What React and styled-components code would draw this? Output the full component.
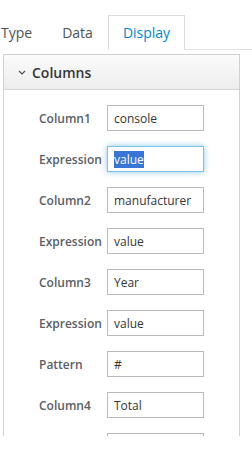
import React, { useEffect, useRef } from "react";
import styled, { createGlobalStyle } from "styled-components";

const GlobalStyle = createGlobalStyle`
  body {
    margin: 0;
    background: #fff;
    font-family: "Open Sans", "Liberation Sans", sans-serif;
  }
`;

const rows = [
  { label: "Column1", value: "console" },
  { label: "Expression", value: "value", focused: true },
  { label: "Column2", value: "manufacturer" },
  { label: "Expression", value: "value" },
  { label: "Column3", value: "Year" },
  { label: "Expression", value: "value" },
  { label: "Pattern", value: "#" },
  { label: "Column4", value: "Total" },
  { label: "Expression", value: "value" },
];

function App() {
  const focusRef = useRef(null);

  useEffect(() => {
    if (focusRef.current) {
      focusRef.current.focus();
      focusRef.current.setSelectionRange(0, focusRef.current.value.length);
    }
  }, []);

  return (
    <Page>
      <GlobalStyle />
      <TabBar>
        <Tab>Type</Tab>
        <Tab>Data</Tab>
        <Tab $active>Display</Tab>
      </TabBar>
      <ScrollArea>
        <Panel>
          <PanelHeader>
            <svg width="8" height="5" viewBox="0 0 8 5">
              <path d="M1 1 L4 4 L7 1" fill="none" stroke="#4d5258" strokeWidth="1.2" />
            </svg>
            <span>Columns</span>
          </PanelHeader>
          <PanelBody>
            {rows.map((row, i) => (
              <Row key={i}>
                <Label>{row.label}</Label>
                <Field
                  ref={row.focused ? focusRef : null}
                  defaultValue={row.value}
                  $focused={row.focused}
                />
              </Row>
            ))}
          </PanelBody>
        </Panel>
      </ScrollArea>
    </Page>
  );
}

export default App;

const Page = styled.div`
  width: 252px;
  height: 450px;
  overflow: hidden;
  background: #fff;
`;

const TabBar = styled.div`
  display: flex;
  margin-top: 15px;
  margin-left: -14px;
  border-bottom: 1px solid #e3e3e3;
`;

const Tab = styled.div`
  height: 33px;
  line-height: 34px;
  padding: 0 14px;
  font-size: 14px;
  color: ${(p) => (p.$active ? "#0088ce" : "#4d5258")};
  background: #fff;
  border: 1px solid ${(p) => (p.$active ? "#dcdcdc" : "transparent")};
  border-bottom-color: #fff;
  margin-bottom: -1px;
`;

const ScrollArea = styled.div`
  height: 386px;
  overflow: hidden;
  padding: 14px 0 0 3px;
  box-sizing: border-box;
`;

const Panel = styled.div`
  width: 237px;
  margin-top: -10px;
  box-sizing: border-box;
  border: 1px solid #d1d1d1;
`;

const PanelHeader = styled.div`
  height: 34px;
  display: flex;
  align-items: center;
  gap: 6px;
  padding-left: 14px;
  background: linear-gradient(#fbfbfb, #ededed);
  border-bottom: 1px solid #d6d6d6;
  font-size: 14px;
  font-weight: 600;
  color: #363636;

  svg {
    margin-top: 1px;
  }
`;

const PanelBody = styled.div`
  display: flex;
  flex-direction: column;
  gap: 15px;
  padding: 15px 0 40px 35px;
`;

const Row = styled.div`
  display: grid;
  grid-template-columns: 68px 97px;
  align-items: center;
`;

const Label = styled.label`
  font-size: 12px;
  font-weight: 600;
  color: #5b6065;
  white-space: nowrap;
`;

const Field = styled.input`
  box-sizing: border-box;
  width: 97px;
  height: 26px;
  padding: 0 6px;
  font-family: "Open Sans", "Liberation Sans", sans-serif;
  font-size: 12px;
  color: #363636;
  border: 1px solid ${(p) => (p.$focused ? "#7dc3e8" : "#bbbbbb")};
  box-shadow: ${(p) => (p.$focused ? "0 0 6px rgba(0, 136, 206, 0.45)" : "none")};
  outline: none;
  border-radius: 0;
  background: #fff;

  &::selection {
    background: #3875d7;
    color: #fff;
  }
`;
